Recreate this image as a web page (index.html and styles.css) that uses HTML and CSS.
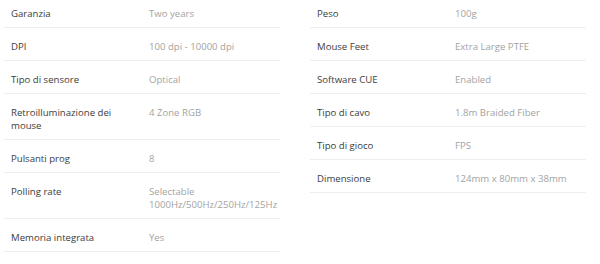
FILE: index.html
```html
<!DOCTYPE html>
<html lang="it">
<head>
<meta charset="utf-8">
<link rel="stylesheet" href="styles.css">
</head>
<body>
<div class="specs">
  <div class="col">
    <div class="row"><div class="k">Garanzia</div><div class="v">Two years</div></div>
    <div class="row"><div class="k">DPI</div><div class="v">100 dpi - 10000 dpi</div></div>
    <div class="row"><div class="k">Tipo di sensore</div><div class="v">Optical</div></div>
    <div class="row"><div class="k">Retroilluminazione dei mouse</div><div class="v">4 Zone RGB</div></div>
    <div class="row"><div class="k">Pulsanti prog</div><div class="v">8</div></div>
    <div class="row"><div class="k">Polling rate</div><div class="v">Selectable 1000Hz/500Hz/250Hz/125Hz</div></div>
    <div class="row"><div class="k">Memoria integrata</div><div class="v">Yes</div></div>
  </div>
  <div class="col">
    <div class="row"><div class="k">Peso</div><div class="v">100g</div></div>
    <div class="row"><div class="k">Mouse Feet</div><div class="v">Extra Large PTFE</div></div>
    <div class="row"><div class="k">Software CUE</div><div class="v">Enabled</div></div>
    <div class="row"><div class="k">Tipo di cavo</div><div class="v">1.8m Braided Fiber</div></div>
    <div class="row"><div class="k">Tipo di gioco</div><div class="v">FPS</div></div>
    <div class="row"><div class="k">Dimensione</div><div class="v">124mm x 80mm x 38mm</div></div>
  </div>
</div>
</body>
</html>
```
FILE: styles.css
```css
html, body {
  margin: 0;
  padding: 0;
  background: #fff;
}
body {
  font-family: "Open Sans", "Liberation Sans", sans-serif;
  font-size: 9.6px;
  line-height: 13px;
}
.specs {
  display: grid;
  grid-template-columns: 276px 276px;
  column-gap: 30px;
  align-items: start;
  padding-left: 4px;
  margin-top: -5px;
}
.row {
  display: grid;
  grid-template-columns: 138px 138px;
  border-bottom: 1px solid #eeeeee;
}
.k, .v {
  padding: 12px 7px 7px 7px;
}
.k {
  color: #3c3c3c;
}
.v {
  color: #a3a3a3;
  padding-right: 0;
}
```
